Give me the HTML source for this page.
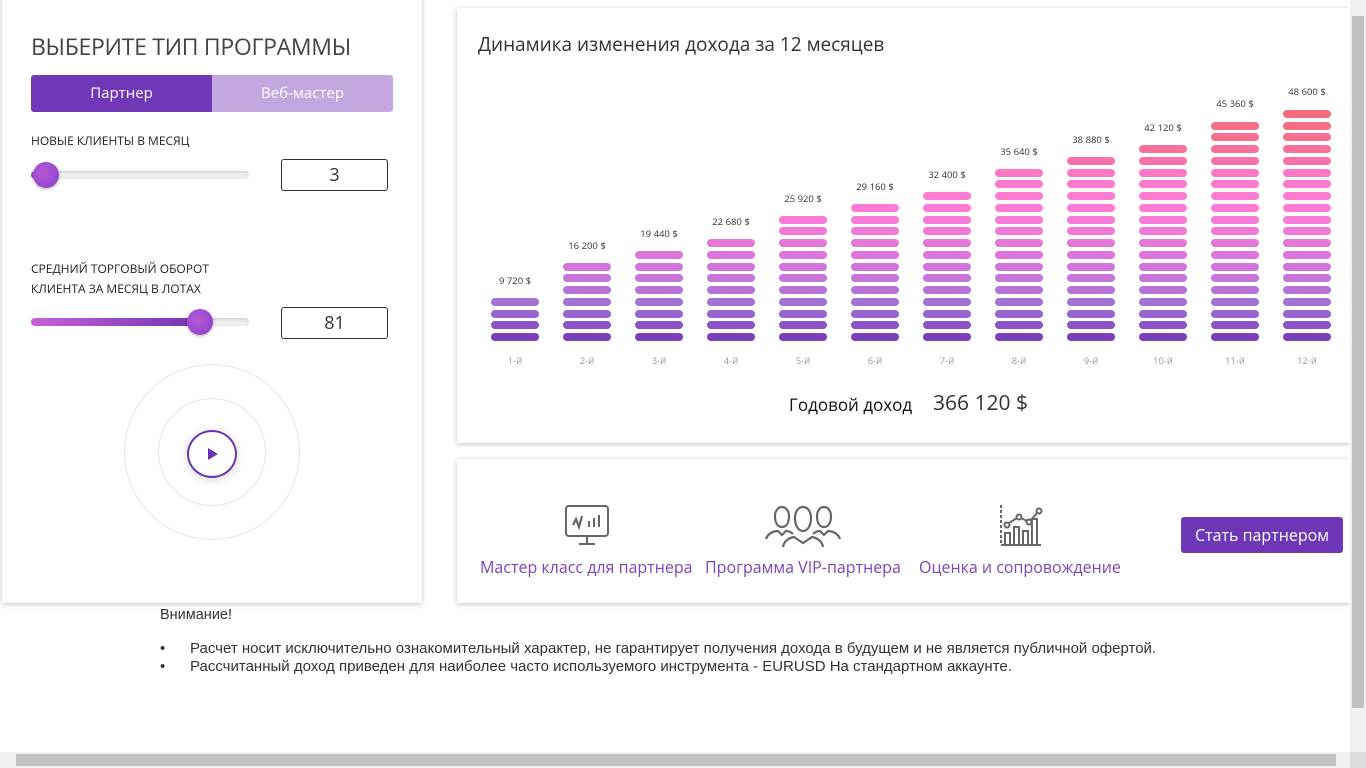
<!DOCTYPE html>
<html><head><meta charset="utf-8"><style>
*{box-sizing:border-box;margin:0;padding:0}
body{width:1366px;height:768px;overflow:hidden;background:#fff;font-family:"Open Sans","Liberation Sans","DejaVu Sans",sans-serif;position:relative;color:#333}
.card{position:absolute;background:#fff;box-shadow:0 1px 5px rgba(0,0,0,.25)}
.abs{position:absolute}
.col{position:absolute;width:48px;bottom:427px;display:flex;flex-direction:column-reverse;gap:3.75px}
.col i{display:block;height:8px;border-radius:4px;flex:none}
.col i:nth-child(1){background:#7a3fbd}.col i:nth-child(2){background:#8a52c6}.col i:nth-child(3){background:#9764cd}.col i:nth-child(4){background:#a472d3}
.col i:nth-child(5){background:#b774d6}.col i:nth-child(6){background:#c575d8}.col i:nth-child(7){background:#d175da}.col i:nth-child(8){background:#dc76dc}
.col i:nth-child(9){background:#e678da}.col i:nth-child(10){background:#f07ad8}.col i:nth-child(11){background:#f87ad6}.col i:nth-child(12){background:#fd7bd4}
.col i:nth-child(13){background:#ff7bd2}.col i:nth-child(14){background:#ff7acf}.col i:nth-child(15){background:#fe77c4}.col i:nth-child(16){background:#fb72aa}
.col i:nth-child(17){background:#f9719c}.col i:nth-child(18){background:#f7708f}.col i:nth-child(19){background:#f56e84}.col i:nth-child(20){background:#f36c7c}
.val{position:absolute;width:60px;text-align:center;font-size:9.5px;color:#333}
.mo{position:absolute;width:48px;text-align:center;font-size:9.5px;color:#999;top:354px}
.inp{position:absolute;left:281px;width:107px;height:32px;border:1px solid #333;border-radius:3px;text-align:center;font-size:18px;line-height:30px;color:#333}
.track{position:absolute;left:31px;width:218px;height:8px;border-radius:4px;background:#eee;box-shadow:inset 0 1px 2px rgba(0,0,0,.15)}
.knob{position:absolute;width:26px;height:26px;border-radius:50%;background:radial-gradient(circle at 40% 40%,#b55ad8,#8a3fc8);box-shadow:0 1px 3px rgba(0,0,0,.3)}
.lbl{position:absolute;left:31px;font-size:12px;color:#222}
.feat{position:absolute;top:556px;font-size:16px;color:#7a45bb;white-space:nowrap}
</style></head><body>

<div class="card" style="left:2px;top:-4px;width:420px;height:607px"></div>
<div class="abs" style="left:31px;top:30px;font-size:23px;color:#444;letter-spacing:-.3px">ВЫБЕРИТЕ ТИП ПРОГРАММЫ</div>
<div class="abs" style="left:31px;top:75px;width:362px;height:37px;border-radius:3px;overflow:hidden;background:#c3a8e0">
 <div class="abs" style="left:0;top:0;width:181px;height:37px;background:#7038b9;color:#fff;font-size:15px;text-align:center;line-height:37px">Партнер</div>
 <div class="abs" style="left:181px;top:0;width:181px;height:37px;color:#fff;font-size:15px;text-align:center;line-height:37px">Веб-мастер</div>
</div>
<div class="lbl" style="top:132px">НОВЫЕ КЛИЕНТЫ В МЕСЯЦ</div>
<div class="track" style="top:171px"></div>
<div class="abs" style="left:31px;top:171px;width:12px;height:8px;border-radius:4px;background:#9c4bd0"></div>
<div class="knob" style="left:33px;top:162px"></div>
<div class="inp" style="top:159px">3</div>
<div class="lbl" style="top:259px;line-height:20px">СРЕДНИЙ ТОРГОВЫЙ ОБОРОТ<br>КЛИЕНТА ЗА МЕСЯЦ В ЛОТАХ</div>
<div class="track" style="top:318px"></div>
<div class="abs" style="left:31px;top:318px;width:172px;height:8px;border-radius:4px;background:linear-gradient(to right,#c860d4,#6e35b5)"></div>
<div class="knob" style="left:187px;top:309px"></div>
<div class="inp" style="top:307px">81</div>
<div class="abs" style="left:124px;top:364px;width:176px;height:176px;border-radius:50%;border:1px solid #e6e2f2"></div>
<div class="abs" style="left:158px;top:398px;width:108px;height:108px;border-radius:50%;border:1px solid #e6e2f2"></div>
<div class="abs" style="left:187px;top:430px;width:50px;height:48px;border-radius:50%;border:2px solid #6a35b5;background:#fff;box-shadow:0 2px 10px rgba(0,0,0,.15)"></div>
<div class="abs" style="left:208px;top:448px;width:0;height:0;border-left:10px solid #6a35b5;border-top:6px solid transparent;border-bottom:6px solid transparent"></div>

<div class="card" style="left:457px;top:8px;width:893px;height:435px"></div>
<div class="abs" style="left:478px;top:31px;font-size:19px;color:#333">Динамика изменения дохода за 12 месяцев</div>

<div class="col" style="left:491px"><i></i><i></i><i></i><i></i></div><div class="val" style="left:485px;top:274px">9 720 $</div><div class="mo" style="left:491px">1-й</div>
<div class="col" style="left:563px"><i></i><i></i><i></i><i></i><i></i><i></i><i></i></div><div class="val" style="left:557px;top:239px">16 200 $</div><div class="mo" style="left:563px">2-й</div>
<div class="col" style="left:635px"><i></i><i></i><i></i><i></i><i></i><i></i><i></i><i></i></div><div class="val" style="left:629px;top:227px">19 440 $</div><div class="mo" style="left:635px">3-й</div>
<div class="col" style="left:707px"><i></i><i></i><i></i><i></i><i></i><i></i><i></i><i></i><i></i></div><div class="val" style="left:701px;top:215px">22 680 $</div><div class="mo" style="left:707px">4-й</div>
<div class="col" style="left:779px"><i></i><i></i><i></i><i></i><i></i><i></i><i></i><i></i><i></i><i></i><i></i></div><div class="val" style="left:773px;top:192px">25 920 $</div><div class="mo" style="left:779px">5-й</div>
<div class="col" style="left:851px"><i></i><i></i><i></i><i></i><i></i><i></i><i></i><i></i><i></i><i></i><i></i><i></i></div><div class="val" style="left:845px;top:180px">29 160 $</div><div class="mo" style="left:851px">6-й</div>
<div class="col" style="left:923px"><i></i><i></i><i></i><i></i><i></i><i></i><i></i><i></i><i></i><i></i><i></i><i></i><i></i></div><div class="val" style="left:917px;top:168px">32 400 $</div><div class="mo" style="left:923px">7-й</div>
<div class="col" style="left:995px"><i></i><i></i><i></i><i></i><i></i><i></i><i></i><i></i><i></i><i></i><i></i><i></i><i></i><i></i><i></i></div><div class="val" style="left:989px;top:145px">35 640 $</div><div class="mo" style="left:995px">8-й</div>
<div class="col" style="left:1067px"><i></i><i></i><i></i><i></i><i></i><i></i><i></i><i></i><i></i><i></i><i></i><i></i><i></i><i></i><i></i><i></i></div><div class="val" style="left:1061px;top:133px">38 880 $</div><div class="mo" style="left:1067px">9-й</div>
<div class="col" style="left:1139px"><i></i><i></i><i></i><i></i><i></i><i></i><i></i><i></i><i></i><i></i><i></i><i></i><i></i><i></i><i></i><i></i><i></i></div><div class="val" style="left:1133px;top:121px">42 120 $</div><div class="mo" style="left:1139px">10-й</div>
<div class="col" style="left:1211px"><i></i><i></i><i></i><i></i><i></i><i></i><i></i><i></i><i></i><i></i><i></i><i></i><i></i><i></i><i></i><i></i><i></i><i></i><i></i></div><div class="val" style="left:1205px;top:97px">45 360 $</div><div class="mo" style="left:1211px">11-й</div>
<div class="col" style="left:1283px"><i></i><i></i><i></i><i></i><i></i><i></i><i></i><i></i><i></i><i></i><i></i><i></i><i></i><i></i><i></i><i></i><i></i><i></i><i></i><i></i></div><div class="val" style="left:1277px;top:85px">48 600 $</div><div class="mo" style="left:1283px">12-й</div>

<div class="abs" style="left:789px;top:393px;font-size:17px;color:#111">Годовой доход</div>
<div class="abs" style="left:933px;top:389px;font-size:21px;color:#333">366 120 $</div>

<div class="card" style="left:457px;top:459px;width:893px;height:144px"></div>
<svg class="abs" style="left:563px;top:503px" width="48" height="44" viewBox="0 0 48 44" fill="none" stroke="#666" stroke-width="2">
<rect x="3" y="3" width="42" height="30" rx="3"/><path d="M24 33v7M16 41h16"/>
<path d="M10 22l3-6 3 8 3-11" stroke-width="2.2"/><path d="M26 24v-6M31 24v-9M36 24v-12"/></svg>
<svg class="abs" style="left:765px;top:503px" width="76" height="44" viewBox="0 0 76 44" fill="none" stroke="#666" stroke-width="2.2">
<path d="M17 24c-5 0-7-5-7-11 0-5 3-9 7-9s7 4 7 9c0 6-2 11-7 11z"/><path d="M59 24c-5 0-7-5-7-11 0-5 3-9 7-9s7 4 7 9c0 6-2 11-7 11z"/>
<path d="M38 28c-5 0-8-6-8-13 0-6 3-11 8-11s8 5 8 11c0 7-3 13-8 13z" fill="#fff"/>
<path d="M1 36c2-6 8-8 12-8l4 4 4-4c3 0 5 1 7 3M48 31c2-2 4-3 7-3l4 4 4-4c4 0 10 2 12 8M18 44c1-6 6-9 11-10l9 6 9-6c5 1 10 4 11 10"/></svg>
<svg class="abs" style="left:999px;top:505px" width="44" height="42" viewBox="0 0 44 42" fill="none" stroke="#666" stroke-width="2">
<path d="M2 0v40" stroke-dasharray="3 2"/><path d="M2 40h40"/>
<path d="M6 40V28h5v12M15 40V22h5v18M24 40V26h5v14M33 40V14h5v26"/>
<circle cx="8" cy="20" r="2.5"/><circle cx="20" cy="12" r="2.5"/><circle cx="30" cy="17" r="2.5"/><circle cx="40" cy="6" r="2.5"/>
<path d="M10 18l8-5M22 13l6 3M32 15l6-7"/></svg>
<div class="feat" style="left:480px">Мастер класс для партнера</div>
<div class="feat" style="left:705px">Программа VIP-партнера</div>
<div class="feat" style="left:919px">Оценка и сопровождение</div>
<div class="abs" style="left:1181px;top:517px;width:162px;height:36px;border-radius:3px;background:#6d37b7;color:#fff;font-size:16px;text-align:center;line-height:36px">Стать партнером</div>

<div class="abs" style="left:160px;top:607px;font-family:'Liberation Sans',sans-serif;font-size:14.5px;color:#333">Внимание!</div>
<div class="abs" style="left:160px;top:640px;font-family:'Liberation Sans',sans-serif;font-size:15px;color:#333;line-height:18px;white-space:nowrap">
<div><span style="display:inline-block;width:30px">•</span>Расчет носит исключительно ознакомительный характер, не гарантирует получения дохода в будущем и не является публичной офертой.</div>
<div><span style="display:inline-block;width:30px">•</span>Рассчитанный доход приведен для наиболее часто используемого инструмента - EURUSD На стандартном аккаунте.</div>
</div>

<div class="abs" style="left:1350px;top:0;width:16px;height:752px;background:#f1f1f1"></div>
<div class="abs" style="left:1352px;top:16px;width:12px;height:692px;background:#c1c1c1"></div>
<div class="abs" style="left:0;top:752px;width:1366px;height:16px;background:#f1f1f1"></div>
<div class="abs" style="left:16px;top:754px;width:1320px;height:12px;background:#c1c1c1"></div>
<div class="abs" style="left:1350px;top:752px;width:16px;height:16px;background:#dcdcdc"></div>
</body></html>
